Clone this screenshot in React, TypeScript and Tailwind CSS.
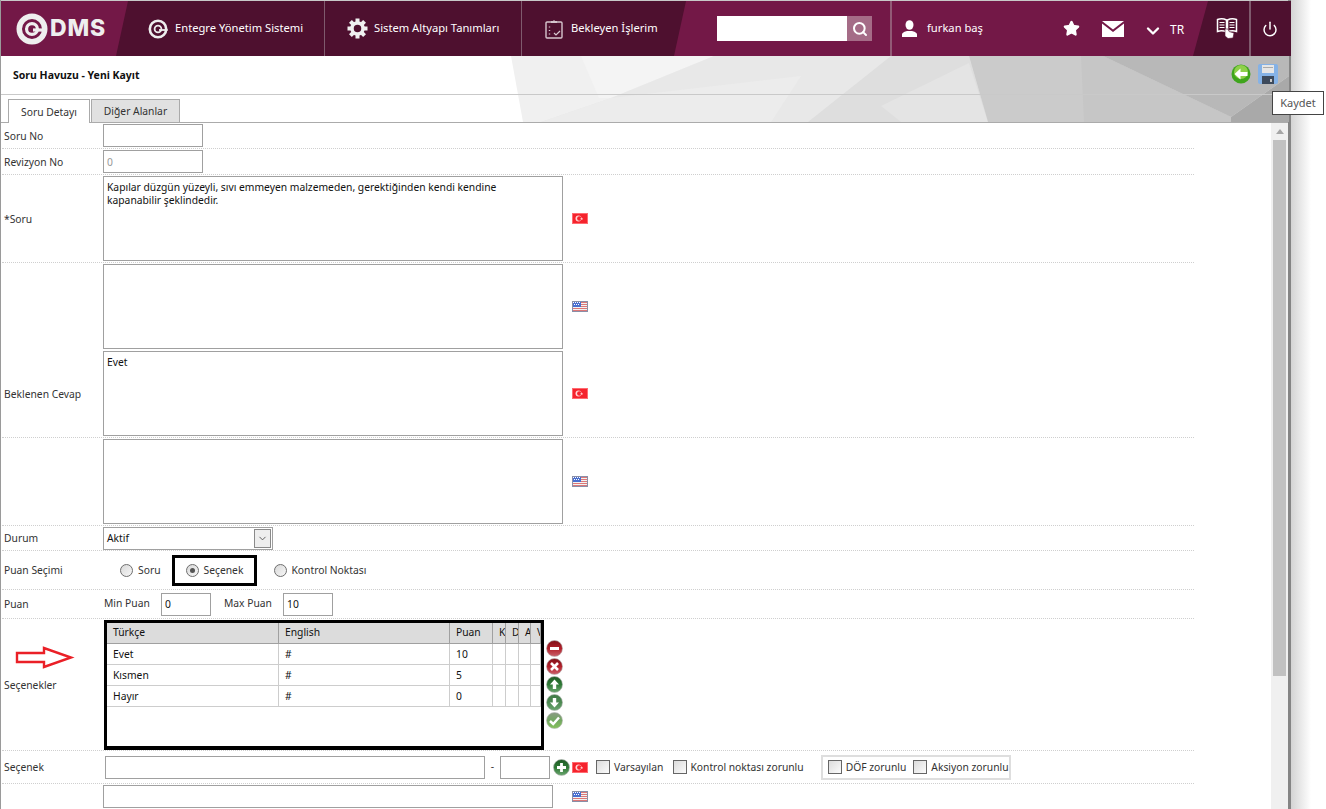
import type { ReactNode } from "react";
import { Search, Star, ChevronDown, Power } from "lucide-react";

const font = "font-['Noto_Sans',sans-serif]";

function TrFlag() {
  return (
    <svg width="16" height="11" viewBox="0 0 16 11" className="shrink-0">
      <rect width="16" height="11" fill="#f5232d" />
      <rect x="0.5" y="0.5" width="15" height="10" fill="none" stroke="#ff6a70" />
      <circle cx="6.5" cy="5.5" r="3" fill="#ffd6d6" />
      <circle cx="7.400" cy="5.500" r="2.300" fill="#f5232d" />
      <path d="M9.500 4.200l.5 1 1.100.1-.8.7.3 1.100-1-.6-.9.6.2-1.100-.7-.7 1-.1z" fill="#ffd6d6" />
    </svg>
  );
}

function UsFlag() {
  return (
    <svg width="16" height="11" viewBox="0 0 16 11" className="shrink-0">
      <rect width="16" height="11" fill="#f2f2f2" />
      <rect y="1" width="16" height="1" fill="#d77" />
      <rect y="3" width="16" height="1" fill="#d77" />
      <rect y="5" width="16" height="1" fill="#d77" />
      <rect y="7" width="16" height="1" fill="#d77" />
      <rect y="9" width="16" height="1" fill="#d77" />
      <rect width="9" height="6" fill="#4a6fd0" />
      <path d="M1 1.500h1M3 1.500h1M5 1.500h1M7 1.500h1M2 3.500h1M4 3.500h1M6 3.500h1" stroke="#fff" strokeWidth="1" />
      <rect x="0.500" y="0.500" width="15" height="10" fill="none" stroke="#8a8fa8" />
    </svg>
  );
}

function RoundIcon({ kind }: { kind: "minus" | "x" | "up" | "down" | "check" | "plus" }) {
  const red = kind === "minus" || kind === "x";
  const light = kind === "check" || kind === "down";
  const id = `ball-${kind}`;
  return (
    <svg width="17" height="17" viewBox="0 0 17 17" className="shrink-0">
      <defs>
        <linearGradient id={id} x1="0" y1="0" x2="0" y2="1">
          <stop offset="0" stopColor={red ? "#7d1018" : kind === "check" ? "#8a9a84" : light ? "#3f7a46" : "#1d5a24"} />
          <stop offset="0.5" stopColor={red ? "#b3212b" : kind === "check" ? "#72a860" : light ? "#4d8a52" : "#2f7a36"} />
          <stop offset="1" stopColor={red ? "#c9606a" : kind === "check" ? "#86c25c" : "#6aa56e"} />
        </linearGradient>
      </defs>
      <circle cx="8.500" cy="8.500" r="8" fill={`url(#${id})`} stroke="#b7b7b7" strokeWidth="0.6" />
      {kind === "minus" && <rect x="4" y="7" width="9" height="3" fill="#fff" />}
      {kind === "x" && <path d="M5 5l7 7M12 5l-7 7" stroke="#fff" strokeWidth="2.600" />}
      {kind === "up" && <path d="M8.500 3.500L13 8.500H10.200V13H6.800V8.500H4z" fill="#fff" />}
      {kind === "down" && <path d="M8.500 13.500L13 8.500H10.200V4H6.800V8.500H4z" fill="#fff" />}
      {kind === "check" && <path d="M4 9l3.200 3L13 5.500" stroke="#fff" strokeWidth="2.400" fill="none" />}
      {kind === "plus" && <path d="M8.500 4v9M4 8.500h9" stroke="#fff" strokeWidth="2.800" />}
    </svg>
  );
}

function GearIcon() {
  const teeth = [0, 45, 90, 135, 180, 225, 270, 315];
  return (
    <svg width="21" height="21" viewBox="0 0 21 21" className="mr-[6px]">
      {teeth.map((a) => (
        <rect key={a} x="8.500" y="0.500" width="4" height="5" fill="#f0f0f0" transform={`rotate(${a} 10.500 10.500)`} />
      ))}
      <circle cx="10.500" cy="10.500" r="5.500" fill="none" stroke="#f0f0f0" strokeWidth="3.500" />
    </svg>
  );
}

function ClipboardIcon() {
  return (
    <svg width="18" height="20" viewBox="0 0 18 20" className="mr-[8px]">
      <rect x="1" y="3" width="16" height="16" rx="1" fill="none" stroke="#d6c6ce" strokeWidth="1.400" />
      <path d="M6 4V2h2l1-1 1 1h2v2z" fill="#d6c6ce" />
      <path d="M4.500 7.500v1M4.500 11v1M4.500 14.500v1" stroke="#d6c6ce" strokeWidth="1.400" />
      <path d="M9 14l2 2 4-4" fill="none" stroke="#d6c6ce" strokeWidth="1.200" />
    </svg>
  );
}

function UserIcon() {
  return (
    <svg width="15" height="17" viewBox="0 0 15 17" className="mr-[10px]">
      <ellipse cx="7.500" cy="5" rx="4" ry="4.800" fill="#fff" />
      <path d="M0 17v-2.500c0-2 3-3 5-3.500h5c2 .5 5 1.500 5 3.500V17z" fill="#fff" />
    </svg>
  );
}

function MailIcon() {
  return (
    <svg width="22" height="16" viewBox="0 0 22 16" className="ml-[22px]">
      <path d="M0 0h22L11 8.500z" fill="#fff" />
      <path d="M0 2.500l11 8.500 11-8.500V16H0z" fill="#fff" />
    </svg>
  );
}

function QMark({ size, thick, inner }: { size: number; thick: number; inner: number }) {
  const c = size / 2;
  return (
    <svg width={size} height={size} viewBox={`0 0 ${size} ${size}`}>
      <circle cx={c} cy={c} r={c - thick / 2 - 0.5} fill="none" stroke="#eee" strokeWidth={thick} />
      <circle cx={c} cy={c} r={size * 0.17} fill="none" stroke="#eee" strokeWidth={inner} />
      <rect x={c + 1} y={c - inner / 2 + 1} width={c - thick / 2} height={inner} fill="#eee" />
    </svg>
  );
}

function Radio({ checked }: { checked?: boolean }) {
  return (
    <span className="flex h-[13px] w-[13px] shrink-0 items-center justify-center rounded-full border border-[#6e6e6e] bg-gradient-to-br from-[#d9d9d9] to-[#f7f7f7]">
      {checked && <span className="h-[5px] w-[5px] rounded-full bg-[#555]" />}
    </span>
  );
}

function Check() {
  return <span className="h-[14px] w-[14px] shrink-0 border border-[#666] bg-gradient-to-br from-[#dcdcdc] to-[#fbfbfb]" />;
}

function Row({ label, h, children, line = true }: { label?: ReactNode; h: string; children?: ReactNode; line?: boolean }) {
  return (
    <div className={`flex w-[1192px] items-center ${h} ${line ? "border-b border-dotted border-[#cfcfcf]" : ""}`}>
      <div className="relative w-[101px] shrink-0 pl-[2px] pt-[2px] text-[#333]">{label}</div>
      {children}
    </div>
  );
}

function TextBox({ children }: { children?: ReactNode }) {
  return (
    <div className="h-[85px] w-[460px] border border-[#a0a0a0] px-[3px] py-[4px] leading-[13px] text-[#111]">{children}</div>
  );
}

function App() {
  const cols = [
    { name: "Türkçe", w: "w-[172px]" },
    { name: "English", w: "w-[171px]" },
    { name: "Puan", w: "w-[43px]" },
    { name: "K", w: "w-[13px]" },
    { name: "D", w: "w-[13px]" },
    { name: "A", w: "w-[12px]" },
    { name: "V", w: "w-[10px]" },
  ];
  const rows = [
    ["Evet", "#", "10"],
    ["Kısmen", "#", "5"],
    ["Hayır", "#", "0"],
  ];

  return (
    <div className={`${font} relative flex h-[809px] w-[1326px] overflow-hidden bg-white text-[10.3px]`}>
      <div className="flex h-full w-[1291px] shrink-0 flex-col border-x border-l-[#9a9a9a] border-r-[3px] border-r-[#858585] bg-white">
        {/* top bar */}
        <header className="relative flex h-[56px] shrink-0 items-center border-t border-[#c8c8c8] bg-[#731847] text-[11.2px] text-white">
          <svg className="absolute left-0 top-0 h-[55px] w-[1290px]" viewBox="0 0 1290 55">
            <polygon points="127,0 685,0 673,55 115,55" fill="#4e102f" />
            <polygon points="1207,0 1290,0 1290,55 1192,55" fill="#4e102f" />
          </svg>
          <div className="relative flex w-[127px] shrink-0 items-center pl-[15px]">
            <QMark size={32} thick={5.5} inner={3.2} />
            <span className="ml-[2px] font-['Inter',sans-serif] text-[23px] font-extrabold tracking-[0.8px] text-[#eee]">DMS</span>
          </div>
          <div className="relative flex h-full w-[197px] shrink-0 items-center border-r border-[#7f5a6d] pl-[20px]">
            <span className="mr-[7px] flex"><QMark size={20} thick={2.6} inner={1.800} /></span>
            <span>Entegre Yönetim Sistemi</span>
          </div>
          <div className="relative flex h-full w-[197px] shrink-0 items-center border-r border-[#7f5a6d] pl-[22px]">
            <GearIcon />
            <span>Sistem Altyapı Tanımları</span>
          </div>
          <div className="relative flex h-full w-[195px] shrink-0 items-center pl-[23px]">
            <ClipboardIcon />
            <span>Bekleyen İşlerim</span>
          </div>
          <div className="relative flex shrink-0">
            <div className="h-[25px] w-[130px] bg-white" />
            <div className="flex h-[25px] w-[25px] items-center justify-center bg-[#a56c87]">
              <Search size={16} strokeWidth={3} className="text-white" />
            </div>
          </div>
          <div className="relative ml-[18px] flex h-full items-center border-l-2 border-[#925a76] pl-[10px]">
            <UserIcon />
            <span className="w-[136px]">furkan baş</span>
            <Star size={17} fill="#fff" />
            <MailIcon />
            <ChevronDown size={20} strokeWidth={2.800} className="ml-[19px] mt-[5px]" />
            <span className="ml-[7px] mt-[3px] text-[12px]">TR</span>
            <svg width="23" height="23" viewBox="0 0 23 23" className="ml-[32px] -mt-[3px]">
              <path d="M1.500 3.500c3-1 6-1 9 .5v12c-3-1.500-6-1.500-9-.5zM20.500 3.500c-3-1-6-1-9 .5v12c3-1.500 6-1.500 9-.5z" fill="none" stroke="#fff" strokeWidth="1.500" />
              <path d="M3.500 6.500h5M3.500 9h5M3.500 11.500h5M13.500 6.500h5M13.500 9h5M13.500 11.500h5" stroke="#fff" strokeWidth="1.200" />
              <path d="M9 13l0 7 3 2.500 5-.5 1-5-5-1.500-1-2.500z" fill="#fff" stroke="#4e102f" strokeWidth="0.600" />
            </svg>
            <div className="ml-[10px] flex h-[55px] items-center border-l-2 border-[#7f5a6d] pl-[11px]">
              <Power size={16} strokeWidth={2.200} />
            </div>
          </div>
        </header>

        {/* title band */}
        <section className="relative h-[67px] shrink-0 border-b border-[#ababab] bg-white">
          <svg className="absolute inset-0 h-[66px] w-[1288px]" viewBox="0 0 1288 66" preserveAspectRatio="none">
            <polygon points="510,0 1288,0 1288,66 522,66" fill="#f0f0f0" />
            <polygon points="580,0 713,0 610,42 598,42" fill="#f4f4f4" />
            <polygon points="713,0 1288,0 1288,66 540,66 610,42" fill="#e8e8e8" />
            <polygon points="610,42 800,20 770,66 540,66" fill="#ececec" />
            <polygon points="890,0 968,0 987,66 807,66" fill="#dedede" />
            <polygon points="880,50 968,7 987,66 900,66" fill="#e4e4e4" />
            <polygon points="968,0 1102,0 1230,61 1230,66 987,66" fill="#cbcbcb" />
            <polygon points="1080,0 1102,0 1230,61 1230,66 1083,66" fill="#c6c6c6" />
            <polygon points="1102,0 1288,0 1288,20 1230,61" fill="#b8b8b8" />
            <polygon points="1230,61 1288,20 1288,66 1230,66" fill="#a9a9a9" />
          </svg>
          <div className="relative flex h-[39px] items-center justify-between border-b border-[#c9c9c9] pl-[12px] pr-[10px]">
            <span className="pt-[2px] text-[10.5px] font-bold text-[#111]">Soru Havuzu - Yeni Kayıt</span>
            <div className="-mt-[2px] flex items-center gap-[7px]">
              <svg width="20" height="20" viewBox="0 0 20 20">
                <circle cx="10" cy="10" r="9.500" fill="#3fa51d" />
                <circle cx="10" cy="8" r="7" fill="#8ed04a" />
                <path d="M3.500 10l6-5.500v3.500h7v4h-7v3.500z" fill="#fff" />
              </svg>
              <svg width="20" height="20" viewBox="0 0 20 20">
                <rect width="20" height="20" rx="2" fill="#85b2e6" />
                <rect x="4" y="1" width="12" height="8" fill="#e6e6e6" />
                <rect x="5" y="3" width="10" height="1" fill="#aaa" />
                <rect x="4" y="12" width="12" height="8" fill="#3d4a5c" />
                <rect x="12" y="15" width="2" height="3" fill="#ccc" />
              </svg>
            </div>
          </div>
          <div className="relative flex h-[27px] items-end pl-[7px]">
            <div className="-mb-[1px] flex h-[24px] w-[82px] items-center justify-center border border-b-0 border-[#aaa] bg-white pt-[2px] text-[#333]">Soru Detayı</div>
            <div className="ml-[1px] flex h-[23px] w-[89px] items-center justify-center border border-b-0 border-[#aaa] bg-[#e1e1e1] pt-[2px] text-[#333]">Diğer Alanlar</div>
          </div>
        </section>

        {/* form area with scrollbar */}
        <div className="relative flex min-h-0 flex-1 overflow-hidden">
          <main className="min-w-0 flex-1 overflow-hidden pl-[1px]">
            <Row label="Soru No" h="h-[26px]">
              <div className="h-[23px] w-[100px] border border-[#a0a0a0]" />
            </Row>
            <Row label="Revizyon No" h="h-[26px]">
              <div className="flex h-[23px] w-[100px] items-center border border-[#a0a0a0] pl-[3px] pt-[2px] text-[#999]">0</div>
            </Row>
            <Row label="*Soru" h="h-[88px]">
              <TextBox>
                Kapılar düzgün yüzeyli, sıvı emmeyen malzemeden, gerektiğinden kendi kendine
                <br />
                kapanabilir şeklindedir.
              </TextBox>
              <span className="ml-[9px]"><TrFlag /></span>
            </Row>
            <Row h="h-[87px]" line={false}>
              <TextBox />
              <span className="ml-[9px]"><UsFlag /></span>
            </Row>
            <Row label="Beklenen Cevap" h="h-[88px]">
              <TextBox>Evet</TextBox>
              <span className="ml-[9px]"><TrFlag /></span>
            </Row>
            <Row h="h-[88px]">
              <TextBox />
              <span className="ml-[9px]"><UsFlag /></span>
            </Row>
            <Row label="Durum" h="h-[25px]">
              <div className="flex h-[23px] w-[170px] items-center justify-between border border-[#a0a0a0] pl-[3px] pr-[1px] text-[#111]">
                <span className="pt-[2px]">Aktif</span>
                <span className="flex h-[19px] w-[17px] items-center justify-center border border-[#8a8a8a] bg-[#eee]">
                  <ChevronDown size={11} strokeWidth={2} className="text-[#555]" />
                </span>
              </div>
            </Row>
            <Row label="Puan Seçimi" h="h-[39px]">
              <div className="ml-[17px] flex items-center gap-[5px] text-[#333]"><Radio /><span className="pt-[2px]">Soru</span></div>
              <div className="ml-[11px] flex h-[31px] w-[85px] items-center gap-[5px] border-[3px] border-black pl-[11px] text-[#333]"><Radio checked /><span className="pt-[2px]">Seçenek</span></div>
              <div className="ml-[17px] flex items-center gap-[5px] text-[#333]"><Radio /><span className="pt-[2px]">Kontrol Noktası</span></div>
            </Row>
            <Row label="Puan" h="h-[29px]">
              <span className="w-[58px] pl-[1px] text-[#333]">Min Puan</span>
              <div className="flex h-[23px] w-[50px] items-center border border-[#a0a0a0] pl-[3px] pt-[2px] text-[#111]">0</div>
              <span className="ml-[13px] w-[59px] text-[#333]">Max Puan</span>
              <div className="flex h-[23px] w-[50px] items-center border border-[#a0a0a0] pl-[3px] pt-[2px] text-[#111]">10</div>
            </Row>
            <Row
              h="h-[132px]"
              label={
                <>
                  <svg width="62" height="23" viewBox="0 0 62 23" className="absolute left-[12px] top-[-30px]">
                    <path d="M3 7h27V2l27 9.500-27 9.500v-5H3z" fill="none" stroke="#ea2027" strokeWidth="2.400" />
                  </svg>
                  Seçenekler
                </>
              }
            >
              <div className="ml-[1px] h-[130px] w-[440px] overflow-hidden border-[3px] border-b-4 border-black bg-white text-[#111]">
                <div className="flex h-[21px] border-b border-[#a0a0a0] bg-[#dcdcdc]">
                  {cols.map((c) => (
                    <div key={c.name} className={`${c.w} flex shrink-0 items-center overflow-hidden whitespace-nowrap border-r border-[#a0a0a0] pl-[6px] pt-[1px]`}>
                      {c.name}
                    </div>
                  ))}
                </div>
                {rows.map((r) => (
                  <div key={r[0]} className="flex h-[21px] border-b border-[#cdcdcd]">
                    {cols.map((c, i) => (
                      <div key={c.name} className={`${c.w} flex shrink-0 items-center border-r border-[#cdcdcd] pl-[6px] pt-[3px]`}>
                        {r[i]}
                      </div>
                    ))}
                  </div>
                ))}
              </div>
              <div className="ml-[2px] flex flex-col gap-[1px]">
                <RoundIcon kind="minus" />
                <RoundIcon kind="x" />
                <RoundIcon kind="up" />
                <RoundIcon kind="down" />
                <RoundIcon kind="check" />
              </div>
            </Row>
            <Row label="Seçenek" h="h-[33px]">
              <div className="ml-[2px] h-[23px] w-[380px] border border-[#a0a0a0]" />
              <span className="w-[15px] text-center text-[#333]">-</span>
              <div className="h-[23px] w-[50px] border border-[#a0a0a0]" />
              <span className="ml-[3px]"><RoundIcon kind="plus" /></span>
              <span className="ml-[2px]"><TrFlag /></span>
              <div className="ml-[8px] flex items-center gap-[4px] whitespace-nowrap text-[#333]"><Check /><span className="pt-[1px]">Varsayılan</span></div>
              <div className="ml-[10px] flex items-center gap-[3px] whitespace-nowrap text-[#333]"><Check /><span className="pt-[1px]">Kontrol noktası zorunlu</span></div>
              <div className="ml-[17px] flex h-[25px] w-[190px] items-center gap-[7px] whitespace-nowrap border-2 border-[#dedede] pl-[5px] text-[#333]">
                <div className="flex items-center gap-[4px]"><Check /><span className="pt-[1px]">DÖF zorunlu</span></div>
                <div className="flex items-center gap-[4px]"><Check /><span className="pt-[1px]">Aksiyon zorunlu</span></div>
              </div>
            </Row>
            <Row h="h-[24px]" line={false}>
              <div className="h-[23px] w-[450px] border border-[#a0a0a0]" />
              <span className="ml-[19px]"><UsFlag /></span>
            </Row>
          </main>
          {/* scrollbar */}
          <div className="flex w-[17px] shrink-0 flex-col items-center bg-[#f0f0f0]">
            <div className="mt-[6px] h-0 w-0 border-x-[4px] border-b-[5px] border-x-transparent border-b-[#a6a6a6]" />
            <div className="mt-[6px] h-[536px] w-[13px] bg-[#c1c1c1]" />
          </div>
        </div>
      </div>

      {/* window shadow */}
      <div className="h-full w-[20px] shrink-0 bg-gradient-to-r from-[#d4d4d4] to-white" />

      {/* tooltip */}
      <div className="absolute left-[1272px] top-[91px] flex h-[24px] w-[52px] items-center justify-center border border-[#444] bg-white text-[11px] text-[#555]">
        Kaydet
      </div>
    </div>
  );
}

export default App;
